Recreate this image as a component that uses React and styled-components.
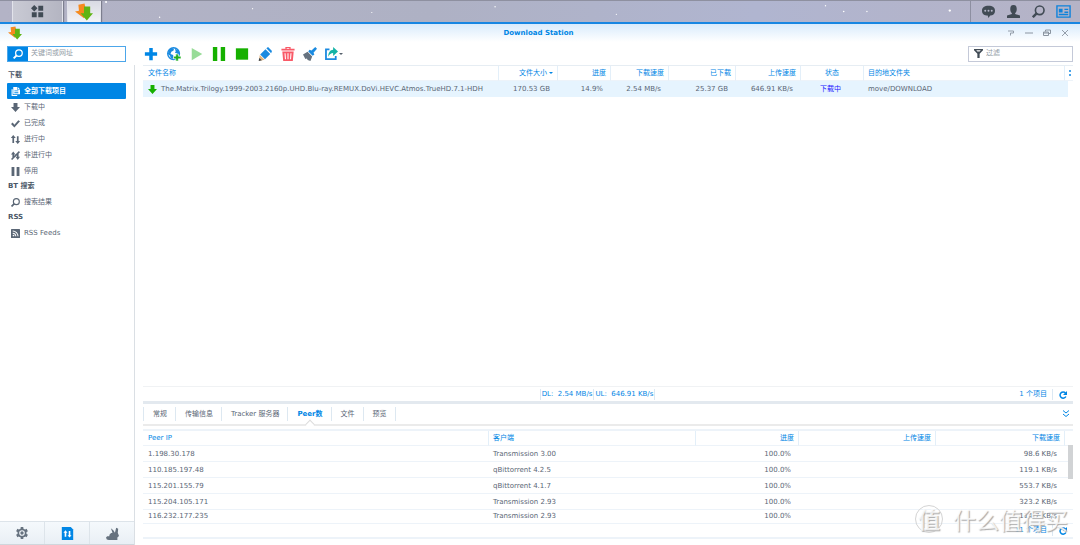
import styled, { createGlobalStyle } from 'styled-components';

const GlobalStyle = createGlobalStyle`
  * {
    box-sizing: border-box;
  }
  body {
    margin: 0;
    background: #fff;
    color: #5a6675;
    font-family: 'DejaVu Sans', 'Noto Sans CJK SC', sans-serif;
    font-size: 7px;
    line-height: 15px;
  }
  button, input {
    font: inherit;
    color: inherit;
  }
`;

const downloadColumns = [
  { label: '文件名称' },
  { label: '文件大小', width: 59, align: 'right', sorted: true },
  { label: '进度', width: 53, align: 'right' },
  { label: '下载速度', width: 58, align: 'right' },
  { label: '已下载', width: 67, align: 'right' },
  { label: '上传速度', width: 65, align: 'right' },
  { label: '状态', width: 63, align: 'center' },
  { label: '目的地文件夹', width: 201 },
];

const peerColumns = [
  { label: 'Peer IP' },
  { label: '客户端', width: 207 },
  { label: '进度', width: 103, align: 'right' },
  { label: '上传速度', width: 137, align: 'right' },
  { label: '下载速度', width: 129, align: 'right' },
];

const peers = [
  ['1.198.30.178', 'Transmission 3.00', '100.0%', '', '98.6 KB/s'],
  ['110.185.197.48', 'qBittorrent 4.2.5', '100.0%', '', '119.1 KB/s'],
  ['115.201.155.79', 'qBittorrent 4.1.7', '100.0%', '', '553.7 KB/s'],
  ['115.204.105.171', 'Transmission 2.93', '100.0%', '', '323.2 KB/s'],
  ['116.232.177.235', 'Transmission 2.93', '100.0%', '', '114.7 KB/s'],
];

const tabs = ['常规', '传输信息', 'Tracker 服务器', 'Peer数', '文件', '预览'];

const paths = {
  search: (
    <g fill='none' stroke='currentColor'>
      <circle cx='9.5' cy='6.5' r='5.3' strokeWidth='2' />
      <path d='M6 10L1 15' strokeWidth='3' />
    </g>
  ),
  docs: (
    <path
      fillRule='evenodd'
      d='M1 4h2v10h8v2H1zM4 0h7v5h5v8H4zM12 0l4 4h-4zM6 6v1.500h7V6zm0 3.500V11h7V9.500z'
    />
  ),
  down: <path d='M4.500 0h7v7H16l-8 9-8-9h4.500z' />,
  check: <path d='M0 9l3-3 3 4 7-8 3 2-10 11z' />,
  updown: <path d='M4 0l4.500 5.500H5.500V14h-3V5.500H-.5zM10.500 2h3v8.500h3L12 16l-4.500-5.500h3z' />,
  inactive: (
    <path d='M4 1l4 5H5.500v4L2.500 13V6H0zM10.500 6l3-3v7H16l-4 6-4-6h2.500zM14 0l2 2L2 16l-2-2z' />
  ),
  pause: <path d='M1 0h5v16H1zM10 0h5v16h-5z' />,
  rss: (
    <g>
      <rect x='0' y='0' width='16' height='16' rx='1' />
      <g fill='none' stroke='#fff' strokeWidth='1.800'>
        <path d='M3 3.500a9.500 9.500 0 019.500 9.500M3 7.500a5.500 5.500 0 015.500 5.500' />
      </g>
      <circle cx='4.500' cy='11.500' r='1.500' fill='#fff' />
    </g>
  ),
  plus: <path d='M6 1h4v5h5v4h-5v5H6v-5H1V6h5z' />,
  globe: (
    <g>
      <circle cx='7.500' cy='7.500' r='6.700' fill='#fff' stroke='#1a8ae0' strokeWidth='1.600' />
      <path fill='#1a8ae0' d='M2 4l3-3 3 1-.5 2L5 5.500 4 8l3 1 .5 2L6 14l-2-2-.5-2L1 8z' />
      <path fill='#1a8ae0' d='M9 2l4 2 1.500 4-2 1L11 7 9 6.500 10 5z' />
      <path fill='#1fae1f' stroke='#fff' strokeWidth='.7' d='M10 8h3v2.500h3v3h-3V16h-3v-2.500H7.500v-3H10z' />
    </g>
  ),
  play: <path d='M2 1l12 7-12 7z' />,
  stop: <path d='M1 1.500h14v13H1z' />,
  edit: (
    <g>
      <path fill='#1a8ae0' d='M2.500 8.500l6-6 5.500 5.500-6 6zM9.500 1.500L11.500 0 16 4.500 15 7z' />
      <path fill='#e3b57e' d='M2 9l5.500 5.500L1 16z' />
      <path fill='#3c4650' d='M1.300 12.500L4.500 15.200 .8 16z' />
    </g>
  ),
  trash: (
    <path
      fillRule='evenodd'
      d='M5 0h6v2h4.500v2H.5V2H5zM6.500 1v1h3V1zM1.500 5h13l-1 11h-11zM4 7l.5 7h1.200L5.200 7zM7.400 7v7h1.200V7zM10.800 7l-.5 7h1.200l.5-7z'
    />
  ),
  broom: (
    <g>
      <path fill='#1a8ae0' d='M14 0l2 2-4 4.500 1 2L11 10 6 5l1.500-2 2.200 1z' />
      <path fill='#66727f' d='M5.200 5.500l5.300 5.300L8.500 16l-3.200-1.200-.8-1.800-1.800.6L0 8.500z' />
    </g>
  ),
  share: (
    <g>
      <path fill='none' stroke='#1a8ae0' strokeWidth='2.200' d='M5.500 3H1.200v11.800h12V11' />
      <path fill='#14b3a6' d='M4 12c0-5 2.500-8.500 6-8.500V0l6 5.500-6 5.500V7.500C7.500 7.500 5.500 9 4 12z' />
    </g>
  ),
  filter: <path d='M0 0h16v2l-6 6.500V16H6V8.500L0 2zM4 2.300l2 2.200h4l2-2.200z' fillRule='evenodd' />,
  refresh: (
    <g>
      <path d='M13 4A6.200 6.200 0 1013.800 11' fill='none' stroke='currentColor' strokeWidth='3' />
      <path d='M16 0v8H8z' />
    </g>
  ),
  collapse: <path d='M2 1l6 5 6-5M2 8l6 5 6-5' fill='none' stroke='currentColor' strokeWidth='2' />,
  gear: (
    <g>
      <circle cx='8' cy='8' r='6' />
      <path d='M8 0v16M1 4l14 8M1 12l14-8' stroke='currentColor' strokeWidth='3.500' />
      <circle cx='8' cy='8' r='3' fill='none' stroke='#f2f6fa' strokeWidth='1.500' />
    </g>
  ),
  file: (
    <g>
      <path d='M1 0h11l3 3v13H1z' />
      <path fill='#fff' d='M5.500 4L8 7H6.500v5h-2V7H3zM9.500 5h2v5H13l-2.500 3L8 10h1.500z' />
    </g>
  ),
  rabbit: (
    <path d='M8 7L6 1.500 9 4l2 3 1.500-6L15 2l-.5 5 1.500 4-2 2v3H3.500L1 15.500 0 13l1.500-1.500H4C4 8.500 6 7 8 7z' />
  ),
  chat: (
    <g>
      <path d='M8 1c5 0 8 2 8 6s-3 6-6 6l-2 3-1-3c-4 0-7-2-7-6s3-6 8-6z' />
      <g fill='#b4b6c8'>
        <circle cx='4' cy='7' r='1.200' />
        <circle cx='8' cy='7' r='1.200' />
        <circle cx='12' cy='7' r='1.200' />
      </g>
    </g>
  ),
  user: <path d='M8 0c3 0 4 2 4 5s-1 4-2 5v1l6 2v3H0v-3l6-2v-1C5 9 4 8 4 5s1-5 4-5z' />,
  widgets: (
    <g>
      <path fill='none' stroke='currentColor' strokeWidth='1.500' d='M1 2h14v12H1z' />
      <path d='M3 5h4v4H3zM9 5h4v1.500H9zM9 8h4v1.500H9zM3 10.500h10V12H3z' />
    </g>
  ),
  apps: <path d='M4 0l4 4-4 4-4-4zM9 1h6v6H9zM1 9h6v6H1zM9 9h6v6H9z' />,
  help: <path d='M2 4h11v4H7v5' fill='none' stroke='currentColor' strokeWidth='1.800' />,
  minimize: <path d='M0 7h16v2H0z' />,
  restore: <path d='M5 5V2h10v7h-4M1 6h10v7H1zM1 8h10' fill='none' stroke='currentColor' strokeWidth='2' />,
  close: <path d='M2 2l12 12M14 2L2 14' fill='none' stroke='currentColor' strokeWidth='1.800' />,
  station: (
    <g>
      <path fill='#f68a1e' d='M3 1.500L8.500.5l1 5 2.500-.5-4 8.500L0 7.500l3.500-.7z' />
      <path fill='#5fb413' d='M8 3h5.500v6H16l-5.500 6.500L5 9h3z' />
    </g>
  ),
};

const Icon = ({ name, size = 10 }) => (
  <svg width={size} height={size} viewBox='0 0 16 16' fill='currentColor' aria-hidden='true'>
    {paths[name]}
  </svg>
);

const sections = [
  {
    title: '下载',
    items: [
      ['docs', '全部下载项目'],
      ['down', '下载中'],
      ['check', '已完成'],
      ['updown', '进行中'],
      ['inactive', '非进行中'],
      ['pause', '停用'],
    ],
  },
  { title: 'BT 搜索', items: [['search', '搜索结果']] },
  { title: 'RSS', items: [['rss', 'RSS Feeds']] },
];

const tools = [
  ['plus', '新增', '#0086e5'],
  ['globe', '新增网址', '#0086e5'],
  ['play', '继续', '#98dc98'],
  ['pause', '暂停', '#16b000'],
  ['stop', '停止', '#16b000'],
  ['edit', '编辑', '#0086e5'],
  ['trash', '删除', '#f95a68'],
  ['broom', '清除', '#66727f'],
];

const HeaderRow = ({ columns, more }) => (
  <tr>
    {columns.map((c) => (
      <HeadCell key={c.label} scope='col' $width={c.width} $align={c.align}>
        {c.label}
        {c.sorted && <SortArrow />}
      </HeadCell>
    ))}
    <HeadCell as='td' $width={9}>{more && <MoreMark />}</HeadCell>
  </tr>
);

const App = () => (
  <>
    <GlobalStyle />
    <Desktop>
      <Taskbar>
        <TaskButton $main aria-label='主菜单'>
          <Icon name='apps' size={13} />
        </TaskButton>
        <TaskButton $active aria-label='Download Station'>
          <Icon name='station' size={18} />
        </TaskButton>
        <Sky viewBox='0 0 860 22' preserveAspectRatio='none' aria-hidden='true'>
          <g fill='#fff'>
            <circle cx='5' cy='1' r='1' />
            <circle cx='58' cy='17' r='0.700' />
            <circle cx='150' cy='8' r='0.600' />
            <circle cx='268' cy='12' r='0.600' />
            <circle cx='390' cy='6' r='0.700' />
            <circle cx='510' cy='14' r='0.600' />
            <circle cx='717' cy='5' r='0.700' />
            <circle cx='735' cy='11' r='0.800' />
            <circle cx='758' cy='11' r='0.700' />
            <circle cx='840' cy='10' r='1.200' />
          </g>
        </Sky>
        <Tray>
          <TrayButton aria-label='消息'><Icon name='chat' size={13} /></TrayButton>
          <TrayButton aria-label='用户'><Icon name='user' size={13} /></TrayButton>
          <TrayButton aria-label='搜索'><Icon name='search' size={13} /></TrayButton>
          <TrayButton $active aria-label='小工具'><Icon name='widgets' size={15} /></TrayButton>
        </Tray>
      </Taskbar>

      <TitleBar>
        <Icon name='station' size={14} />
        <Title>Download Station</Title>
        <WindowButtons>
          {['help', 'minimize', 'restore', 'close'].map((name) => (
            <PlainButton key={name} aria-label={name}>
              <Icon name={name} size={8} />
            </PlainButton>
          ))}
        </WindowButtons>
      </TitleBar>

      <Toolbar>
        <SearchBox>
          <SearchButton aria-label='搜索'><Icon name='search' size={10} /></SearchButton>
          <TextInput aria-label='关键词或网址' placeholder='关键词或网址' />
        </SearchBox>
        <Tools>
          {tools.map(([name, label, color]) => (
            <ToolButton key={name} aria-label={label} $color={color}>
              <Icon name={name} size={14} />
            </ToolButton>
          ))}
          <ToolButton aria-label='共享'>
            <Icon name='share' size={13} />
            <Caret />
          </ToolButton>
        </Tools>
        <FilterBox>
          <Icon name='filter' size={9} />
          <TextInput aria-label='过滤' placeholder='过滤' />
        </FilterBox>
      </Toolbar>

      <Body>
        <Sidebar>
          <Nav>
            {sections.map((s) => (
              <section key={s.title}>
                <SectionTitle>{s.title}</SectionTitle>
                {s.items.map(([icon, label]) => (
                  <NavItem key={label} href='#' $active={icon === 'docs'}>
                    <Icon name={icon} size={9} />
                    {label}
                  </NavItem>
                ))}
              </section>
            ))}
          </Nav>
          <SideFooter>
            <FooterButton aria-label='设置'><Icon name='gear' size={12} /></FooterButton>
            <FooterButton $active aria-label='下载'><Icon name='file' size={13} /></FooterButton>
            <FooterButton aria-label='eMule'><Icon name='rabbit' size={13} /></FooterButton>
          </SideFooter>
        </Sidebar>

        <Content>
          <DownloadList>
            <Table>
              <thead>
                <HeaderRow columns={downloadColumns} more />
              </thead>
              <tbody>
                <SelectedRow>
                  <Cell>
                    <FileName>
                      <Icon name='down' size={9} />
                      The.Matrix.Trilogy.1999-2003.2160p.UHD.Blu-ray.REMUX.DoVi.HEVC.Atmos.TrueHD.7.1-HDH
                    </FileName>
                  </Cell>
                  <Cell $align='right'>170.53 GB</Cell>
                  <Cell $align='right'>14.9%</Cell>
                  <Cell $align='right'>2.54 MB/s</Cell>
                  <Cell $align='right'>25.37 GB</Cell>
                  <Cell $align='right'>646.91 KB/s</Cell>
                  <Cell $align='center'><Status>下载中</Status></Cell>
                  <Cell>move/DOWNLOAD</Cell>
                  <Cell />
                </SelectedRow>
              </tbody>
            </Table>
          </DownloadList>
          <StatusBar>
            <Speeds>
              <Speed>DL:&nbsp; 2.54 MB/s</Speed>
              <Speed>UL:&nbsp; 646.91 KB/s</Speed>
            </Speeds>
            <Count>1 个项目</Count>
            <RefreshButton aria-label='刷新'><Icon name='refresh' size={8} /></RefreshButton>
          </StatusBar>

          <TabBar>
            {tabs.map((tab) => (
              <Tab key={tab} $active={tab === 'Peer数'}>{tab}</Tab>
            ))}
            <CollapseButton aria-label='收起'><Icon name='collapse' size={8} /></CollapseButton>
          </TabBar>

          <PeerList>
            <Table>
              <thead>
                <HeaderRow columns={peerColumns} />
              </thead>
              <tbody>
                {peers.map((row) => (
                  <PeerRow key={row[0]}>
                    {row.map((value, i) => (
                      <Cell key={peerColumns[i].label} $align={peerColumns[i].align}>{value}</Cell>
                    ))}
                    <Cell />
                  </PeerRow>
                ))}
              </tbody>
            </Table>
            <ScrollThumb />
          </PeerList>
          <PeerFooter>
            <Count>11 个项目</Count>
            <RefreshButton aria-label='刷新'><Icon name='refresh' size={8} /></RefreshButton>
          </PeerFooter>
        </Content>
      </Body>

      <Watermark>
        <Seal>值</Seal>
        什么值得买
      </Watermark>
    </Desktop>
  </>
);

const Desktop = styled.div`
  position: relative;
  display: flex;
  flex-direction: column;
  min-height: 100vh;
`;

const PlainButton = styled.button`
  display: flex;
  align-items: center;
  justify-content: center;
  padding: 0;
  border: none;
  background: none;
`;

const Taskbar = styled.header`
  display: flex;
  align-items: stretch;
  height: 24px;
  padding-left: 12px;
  background: linear-gradient(90deg, #b3b3c6, #aeb1c4 40%, #b0b5d0 70%, #b5b3c6);
  border-top: 1px solid #8e90a0;
  border-bottom: 2px solid #1886e2;
`;
const TaskButton = styled(PlainButton)`
  width: ${(props) => (props.$main ? 51 : 34)}px;
  margin-right: ${(props) => (props.$main ? 4 : 0)}px;
  color: #414b55;
  background: ${(props) =>
    props.$active
      ? 'linear-gradient(#d9dae3, #f2f2f6)'
      : 'linear-gradient(90deg, #c9cad4, #b4b5c2)'};
  border: solid #e2e3eb;
  border-width: 0 1px;
  box-shadow: 1px 0 1px #7c7e8e;
`;
const Sky = styled.svg`
  flex: 1;
  min-width: 0;
  height: 21px;
`;
const Tray = styled.div`
  display: flex;
  align-items: center;
  gap: 10px;
  padding: 0 9px 0 10px;
  border-left: 1px solid #8d8fa1;
`;
const TrayButton = styled(PlainButton)`
  width: 15px;
  color: ${(props) => (props.$active ? '#0d83dc' : '#414b55')};
`;

const TitleBar = styled.div`
  display: grid;
  grid-template-columns: 1fr auto 1fr;
  align-items: center;
  height: 18px;
  padding: 0 11px 0 8px;
  background: linear-gradient(#d9ebfc, #fff);
`;
const Title = styled.h1`
  margin: 0;
  color: #0086e5;
  font-size: 7px;
  font-weight: 700;
`;
const WindowButtons = styled.div`
  display: flex;
  justify-content: flex-end;
  gap: 10px;
  color: #8a94a0;
`;

const Toolbar = styled.div`
  display: flex;
  align-items: center;
  height: 23px;
  padding: 0 7px;
`;
const SearchBox = styled.div`
  display: flex;
  width: 119px;
  height: 16px;
  border: 1px solid #4ca6ea;
`;
const SearchButton = styled(PlainButton)`
  flex: none;
  width: 20px;
  color: #fff;
  background: #0086e5;
`;
const TextInput = styled.input`
  flex: 1;
  min-width: 0;
  padding: 0 3px;
  border: none;
  outline: none;
  background: none;
  &::placeholder {
    color: #929ba5;
    opacity: 1;
  }
`;
const Tools = styled.div`
  display: flex;
  justify-content: space-between;
  width: 200px;
  margin: 0 auto 0 17px;
`;
const ToolButton = styled(PlainButton)`
  gap: 1px;
  min-width: 16px;
  color: ${(props) => props.$color};
`;
const Caret = styled.span`
  border: 2px solid transparent;
  border-top-color: #56616d;
  border-bottom: none;
`;
const FilterBox = styled.div`
  display: flex;
  align-items: center;
  width: 105px;
  height: 16px;
  padding-left: 5px;
  color: #414b55;
  border: 1px solid #c4c9d8;
`;

const Body = styled.div`
  display: flex;
  flex: 1;
`;
const Sidebar = styled.aside`
  display: flex;
  flex-direction: column;
  width: 135px;
  border-right: 1px solid #dadfe4;
`;
const Nav = styled.nav`
  flex: 1;
  padding: 3px 8px 0 7px;
`;
const SectionTitle = styled.h2`
  margin: 0;
  padding-left: 1px;
  height: 15px;
  color: #4b5868;
  font-size: 7px;
  font-weight: 700;
`;
const NavItem = styled.a`
  display: flex;
  align-items: center;
  gap: 4px;
  height: 16px;
  padding-left: 4px;
  text-decoration: none;
  border-radius: 1px;
  color: ${(props) => (props.$active ? '#fff' : '#5a6675')};
  background: ${(props) => (props.$active ? '#0086e5' : 'none')};
  font-weight: ${(props) => (props.$active ? 700 : 400)};
`;
const SideFooter = styled.div`
  display: flex;
  height: 24px;
  background: linear-gradient(#f5f9fc, #e9eff5);
  border-top: 1px solid #dde4ea;
  border-bottom: 1px solid #cfd6dc;
`;
const FooterButton = styled(PlainButton)`
  flex: 1;
  color: ${(props) => (props.$active ? '#0086e5' : '#66727f')};
  & + & {
    border-left: 1px solid #dde4ea;
  }
`;

const Content = styled.main`
  display: flex;
  flex: 1;
  flex-direction: column;
  min-width: 0;
  padding: 0 7px 6px 8px;
`;
const DownloadList = styled.div`
  flex: 1;
  border-top: 1px solid #e6edf3;
`;
const Table = styled.table`
  width: 100%;
  table-layout: fixed;
  border-collapse: separate;
  border-spacing: 0;
`;
const HeadCell = styled.th`
  width: ${(props) => (props.$width ? `${props.$width}px` : 'auto')};
  height: 15px;
  padding: 0 4px 0 5px;
  line-height: 14px;
  color: #0086e5;
  font-weight: 400;
  text-align: ${(props) => props.$align || 'left'};
  border-bottom: 1px solid #edf3f9;
  & + & {
    padding-left: 4px;
    border-left: 1px solid #e3eff9;
  }
`;
const SortArrow = styled.span`
  display: inline-block;
  margin-left: 2px;
  vertical-align: middle;
  border: 2px solid transparent;
  border-top-color: #0086e5;
  border-bottom: none;
`;
const MoreMark = styled.span`
  display: block;
  height: 6px;
  border-left: 2px dotted #4ca6ea;
`;
const Cell = styled.td`
  height: 16px;
  padding: 0 7px 0 5px;
  text-align: ${(props) => props.$align || 'left'};
  white-space: nowrap;
`;
const SelectedRow = styled.tr`
  ${Cell} {
    background: #e6f4fe;
  }
  ${Cell}:last-child {
    padding: 0 5px 0 0;
    background-clip: content-box;
  }
`;
const PeerRow = styled.tr`
  ${Cell} {
    line-height: 14px;
    border-bottom: 1px solid #edf3f9;
  }
  &:last-child ${Cell} {
    height: 14px;
    line-height: 13px;
  }
`;
const FileName = styled.div`
  display: flex;
  align-items: center;
  gap: 4px;
  svg {
    color: #16b000;
  }
`;
const Status = styled.span`
  color: #2118ff;
`;

const StatusBar = styled.div`
  display: grid;
  grid-template-columns: 1fr auto 1fr 21px;
  align-items: center;
  height: 15px;
  color: #0086e5;
  border-top: 1px solid #f0f2f4;
`;
const Speeds = styled.div`
  display: flex;
  grid-column: 2;
  border-right: 1px solid #dbe8f3;
`;
const Speed = styled.span`
  padding: 0 1px;
  line-height: 11px;
  border-left: 1px solid #dbe8f3;
`;
const Count = styled.span`
  padding-right: 5px;
  text-align: right;
`;
const RefreshButton = styled(PlainButton)`
  width: 21px;
  height: 11px;
  color: #0086e5;
  border-left: 1px solid #dbe8f3;
`;

const TabBar = styled.div`
  display: flex;
  align-items: center;
  height: 25px;
  border-top: 3px solid #e3e9ef;
  border-bottom: 2px solid #ebebeb;
`;
const Tab = styled.button`
  position: relative;
  height: 14px;
  padding: 0 8px 0 9px;
  line-height: 14px;
  border: none;
  border-right: 1px solid #dde8f1;
  background: none;
  color: ${(props) => (props.$active ? '#0086e5' : '#5a6675')};
  font-weight: ${(props) => (props.$active ? 700 : 400)};
  &:first-child {
    border-left: 1px solid #dde8f1;
  }
  ${(props) =>
    props.$active &&
    `
    &::after {
      content: '';
      position: absolute;
      left: 50%;
      bottom: -7px;
      width: 6px;
      height: 6px;
      transform: translateX(-50%) rotate(45deg);
      background: #fff;
      border: solid #dcdcdc;
      border-width: 1px 0 0 1px;
    }
`}
`;
const CollapseButton = styled(PlainButton)`
  margin-left: auto;
  padding-right: 3px;
  color: #0086e5;
`;

const PeerList = styled.div`
  position: relative;
  margin-top: 3px;
  border-top: 2px solid #edf3f9;
`;
const ScrollThumb = styled.div`
  position: absolute;
  top: 14px;
  right: 0;
  width: 5px;
  height: 34px;
  background: #d1d3d5;
`;
const PeerFooter = styled.div`
  display: flex;
  align-items: center;
  justify-content: flex-end;
  height: 15px;
  color: #0086e5;
  border-bottom: 2px solid #edf3f9;
`;

const Watermark = styled.div`
  position: absolute;
  right: 12px;
  bottom: 11px;
  display: flex;
  align-items: center;
  gap: 10px;
  height: 30px;
  color: rgba(255, 255, 255, 0.8);
  font-family: 'Noto Sans CJK SC', sans-serif;
  font-size: 23px;
  text-shadow: 1px 1px 1px #aaa;
  pointer-events: none;
`;
const Seal = styled.span`
  width: 28px;
  height: 28px;
  line-height: 24px;
  text-align: center;
  font-size: 22px;
  font-weight: 700;
  border: 1px solid #d4d4d4;
  border-radius: 50%;
`;

export default App;
